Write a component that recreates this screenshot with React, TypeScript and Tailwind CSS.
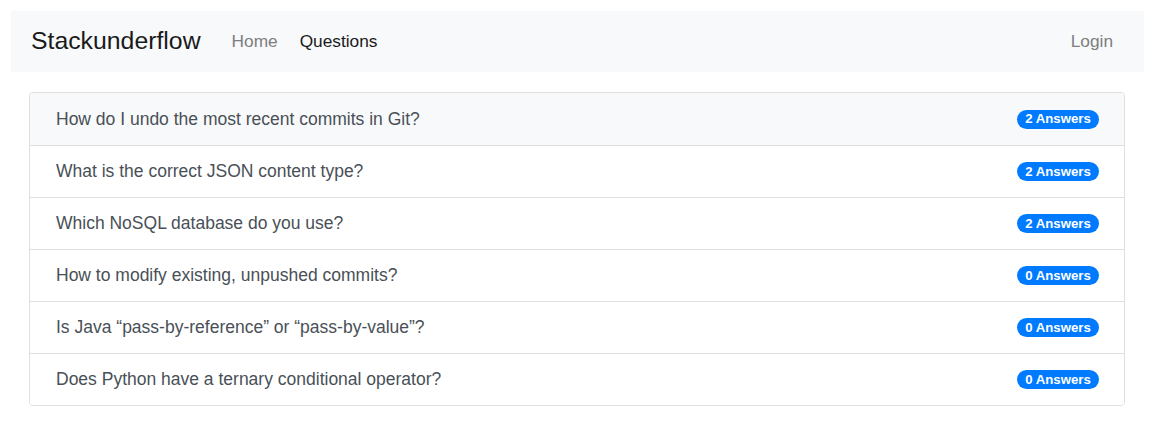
import React from "react";

interface Question {
  id: number;
  title: string;
  answers: number;
}

const questions: Question[] = [
  { id: 1, title: "How do I undo the most recent commits in Git?", answers: 2 },
  { id: 2, title: "What is the correct JSON content type?", answers: 2 },
  { id: 3, title: "Which NoSQL database do you use?", answers: 2 },
  { id: 4, title: "How to modify existing, unpushed commits?", answers: 0 },
  { id: 5, title: "Is Java \u201cpass-by-reference\u201d or \u201cpass-by-value\u201d?", answers: 0 },
  { id: 6, title: "Does Python have a ternary conditional operator?", answers: 0 },
];

const App: React.FC = () => {
  return (
    <div className="min-h-screen bg-white pt-[11px] font-['Liberation_Sans',Arial,sans-serif]">
      {/* navbar */}
      <nav className="ml-[11px] mr-[8px] flex h-[61px] items-center bg-[#f8f9fa] pl-[20px] pr-[31px]">
        <a className="mr-[20px] text-[24.8px] leading-none text-[#1a1a1a]">Stackunderflow</a>
        <a className="px-[11px] text-[17.3px] text-[#7d7e7e]">Home</a>
        <a className="px-[11px] text-[17.3px] text-[#1a1a1a]">Questions</a>
        <a className="ml-auto text-[17.3px] text-[#7d7e7e]">Login</a>
      </nav>

      {/* question list */}
      <div className="mx-[29px] mt-[20px] w-[1096px] overflow-hidden rounded-[4px] border border-[#dfdfdf]">
        {questions.map((q, i) => (
          <div
            key={q.id}
            className={`flex h-[52px] items-center justify-between pl-[26px] pr-[25px] ${
              i > 0 ? "border-t border-[#dfdfdf]" : ""
            } ${i === 0 ? "bg-[#f8f9fa]" : "bg-white"}`}
          >
            <span className="text-[17.5px] text-[#495057]">{q.title}</span>
            <span className="flex h-[19px] w-[82px] items-center justify-center rounded-full bg-[#007bff] text-[13.2px] font-bold text-white">
              {q.answers} Answers
            </span>
          </div>
        ))}
      </div>
    </div>
  );
};

export default App;
